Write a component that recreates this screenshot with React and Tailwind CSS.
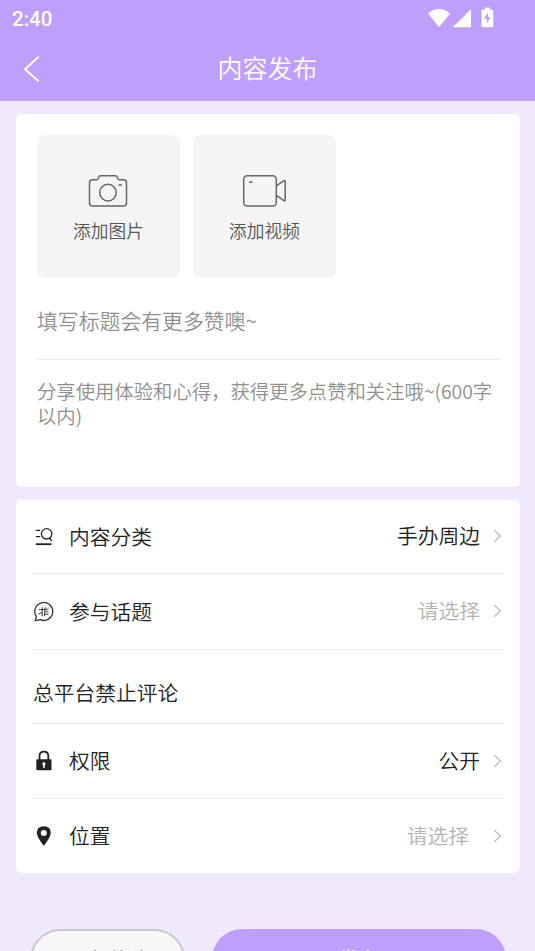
const PLACEHOLDER = 'text-[#b3b3b3]';

function StatusIcons() {
  return (
    <svg className="h-[28px] w-[80px]" viewBox="420 4 80 28" fill="#fff">
      <path d="M439 27.300 428.200 13.400Q433 9 439 9T449.900 13.400Z" />
      <path d="M471 9.200V27.200H452.800Z" />
      <path fillRule="evenodd" d="M485.200 7.600h4.400v1.900h2.400q1.300 0 1.300 1.300v15.100q0 1.300-1.300 1.300h-9.200q-1.300 0-1.300-1.300v-15.100q0-1.300 1.300-1.300h2.400ZM488 12.500l-4 6h2.700v5l4-6.200h-2.700Z" />
    </svg>
  );
}

function BackIcon() {
  return (
    <svg className="h-[28px] w-[18px]" viewBox="0 0 18 28" fill="none" stroke="#fff" strokeWidth="1.900">
      <path d="M15.600 1.800 2 14.200 15.600 26.200" />
    </svg>
  );
}

function CameraIcon() {
  return (
    <svg className="mr-[2px] h-[34px] w-[40px]" viewBox="0 0 40 34" fill="none" stroke="#666" strokeWidth="1.500">
      <path d="M4.500 5.800h4.300q1 0 1.400-1l.5-1.500q.5-1.500 1.900-1.500h14.800q1.400 0 1.900 1.500l.5 1.500q.4 1 1.400 1h4.300q3 0 3 3v20.200q0 3-3 3h-31q-3 0-3-3v-20.200q0-3 3-3Z" />
      <circle cx="20" cy="18.600" r="8.300" />
      <path d="M30.500 11h3.500" />
    </svg>
  );
}

function VideoIcon() {
  return (
    <svg className="h-[34px] w-[46px]" viewBox="0 0 46 34" fill="none" stroke="#666" strokeWidth="1.500">
      <rect x="1.700" y="1.700" width="32.600" height="30.300" rx="3.500" />
      <path d="M7 8h3.500M34.300 11.800 42 6.700q1.200-.7 1.200.7v18.600q0 1.400-1.200.7l-7.700-5.300" />
    </svg>
  );
}

function CategoryIcon() {
  return (
    <svg className="size-[22px]" viewBox="0 0 22 22" fill="none" stroke="#222" strokeWidth="1.300">
      <circle cx="13.600" cy="7.800" r="5.200" />
      <path d="M16.500 12 18.700 15M2.800 4.300h4.400M2.800 10.700h4.400" />
      <path d="M2.800 18.200h15.700" strokeWidth="1.800" />
    </svg>
  );
}

function TopicIcon() {
  return (
    <svg className="size-[22px]" viewBox="0 0 22 22" fill="none" stroke="#333" strokeWidth="1.300">
      <path d="M3.400 15.600A9 9 0 1 1 7.200 18.700L2.300 19.600Z" />
      <path d="M9.200 6.200v9M12.300 6.200l-1 9M6 8.900l9.500-.8M5.700 12.800l3.500-1.300M12.500 10.500l3 .6M11.800 13l3.700.3" strokeWidth="1" />
    </svg>
  );
}

function LockIcon() {
  return (
    <svg className="size-[22px]" viewBox="0 0 22 22">
      <path d="M6.500 10V6q0-4.400 4.400-4.400T15.300 6v4" fill="none" stroke="#222" strokeWidth="1.800" />
      <path fillRule="evenodd" fill="#222" d="M4.300 9.200h13.200q1 0 1 1v9q0 1-1 1H4.300q-1 0-1-1v-9q0-1 1-1ZM10.900 12.300a1.700 1.700 0 0 0-.8 3.100V18h1.600v-2.600a1.700 1.700 0 0 0-.8-3.100Z" />
    </svg>
  );
}

function PinIcon() {
  return (
    <svg className="size-[22px]" viewBox="0 0 22 22">
      <path fillRule="evenodd" fill="#222" d="M10.800 1.200q-7 0-7 6.900 0 4 7 12.700 7-8.700 7-12.700 0-6.900-7-6.900ZM10.800 5a3 3 0 1 1 0 6 3 3 0 0 1 0-6Z" />
    </svg>
  );
}

function Chevron() {
  return (
    <svg className="h-[14px] w-[9px]" viewBox="0 0 9 14" fill="none" stroke="#bbb" strokeWidth="1.300">
      <path d="M1.200 1.200 7.500 7 1.200 12.800" />
    </svg>
  );
}

function UploadBox({ icon, label }) {
  return (
    <button className="flex size-[143px] flex-col items-center rounded-lg bg-[#f5f5f5] pt-[39px] text-[17.700px] leading-[26px] text-[#555]">
      {icon}
      <span className="mt-[9px]">{label}</span>
    </button>
  );
}

function Row({ icon, label, value, valueClass = 'text-[#222]', className }) {
  return (
    <div className={`flex items-center border-[#ebebeb] ${className}`}>
      {icon}
      <span className="ml-[14px]">{label}</span>
      <span className={`ml-auto pb-px ${valueClass}`}>{value}</span>
      <span className="mr-[2px] mb-px ml-[13px] flex"><Chevron /></span>
    </div>
  );
}

export default function App() {
  return (
    <div className="h-[951px] w-[535px] overflow-hidden bg-[#f0e9fe] font-['Noto_Sans_CJK_SC',sans-serif] font-[350] text-[#222]">
      <header className="h-[101px] bg-[#bf9ffc] text-white">
        <div className="flex h-9 items-center justify-between pr-[35px] pl-3">
          <span className="pt-[2px] font-[Roboto,sans-serif] text-[20.500px] font-medium">2:40</span>
          <StatusIcons />
        </div>
        <div className="grid h-[65px] grid-cols-[60px_1fr_60px] items-center">
          <span className="pl-[23px]"><BackIcon /></span>
          <h1 className="pb-[3px] text-center text-[25px] leading-[36px]">内容发布</h1>
        </div>
      </header>

      <main className="pt-[13px] pr-[15px] pl-4">
        <section className="h-[373px] rounded-md bg-white pt-[21px] pr-5 pl-[21px]">
          <div className="flex gap-[13px]">
            <UploadBox icon={<CameraIcon />} label="添加图片" />
            <UploadBox icon={<VideoIcon />} label="添加视频" />
          </div>
          <div className="flex h-[82px] items-center border-b border-[#ebebeb] pt-1 text-[20.850px] text-[#8f8f8f]">填写标题会有更多赞噢~</div>
          <div className="mt-[19px] text-[19.350px] leading-[25px] text-[#8f8f8f]">
            分享使用体验和心得，获得更多点赞和关注哦~(600字<br />以内)
          </div>
        </section>

        <section className="mt-[13px] h-[373px] rounded-md bg-white pr-4 pl-[17px] text-[20.750px]">
          <Row icon={<CategoryIcon />} label="内容分类" value="手办周边" className="h-[74px] border-b" />
          <Row icon={<TopicIcon />} label="参与话题" value="请选择" valueClass={PLACEHOLDER} className="h-[76px] border-b" />
          <div className="flex h-[74px] items-center border-b border-[#ebebeb] pt-[13px]">总平台禁止评论</div>
          <Row icon={<LockIcon />} label="权限" value="公开" className="h-[75px] border-b" />
          <Row icon={<PinIcon />} label="位置" value="请选择" valueClass={`${PLACEHOLDER} mr-[11px]`} className="h-[74px]" />
        </section>

        <div className="mt-[56px] flex gap-[27px] pr-[14px] pl-[14px] text-[20.750px]">
          <button className="h-[61px] w-[155px] rounded-full border-2 border-[#c9c6ce] bg-[#f7f7f7]">保存草稿</button>
          <button className="h-[60px] flex-1 rounded-full bg-[#bf9ffc] text-white">发布</button>
        </div>
      </main>
    </div>
  );
}
